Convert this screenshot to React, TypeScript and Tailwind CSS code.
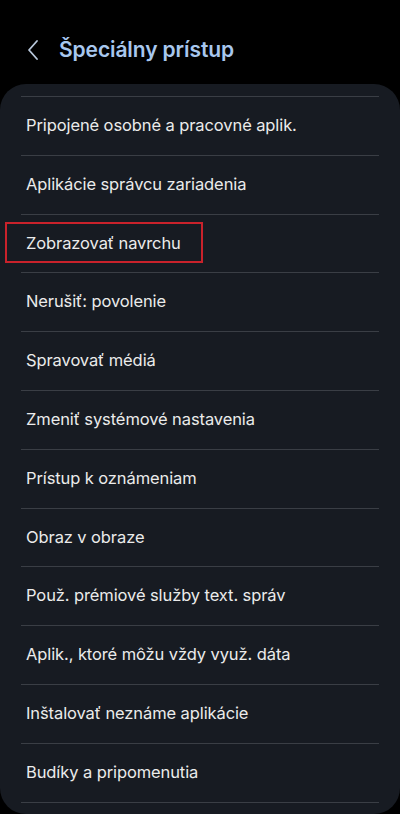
const items = [
  'Pripojené osobné a pracovné aplik.',
  'Aplikácie správcu zariadenia',
  'Zobrazovať navrchu',
  'Nerušiť: povolenie',
  'Spravovať médiá',
  'Zmeniť systémové nastavenia',
  'Prístup k oznámeniam',
  'Obraz v obraze',
  'Použ. prémiové služby text. správ',
  'Aplik., ktoré môžu vždy využ. dáta',
  'Inštalovať neznáme aplikácie',
  'Budíky a pripomenutia',
]

export default function App() {
  return (
    <div
      className="w-[400px] h-[814px] bg-black overflow-hidden flex flex-col"
      style={{ fontFamily: 'Inter, Roboto, "Noto Sans", sans-serif' }}
    >
      {/* Header */}
      <div className="h-[84px] flex items-center pl-[26px] pt-[16px]">
        <svg width="14" height="22" viewBox="0 0 14 22" fill="none">
          <path d="M11 2 L3 11 L11 20" stroke="#b9c8dc" strokeWidth="1.8" strokeLinecap="round" strokeLinejoin="round" />
        </svg>
        <h1 className="ml-[19px] text-[21px] font-semibold text-[#a8c7ee] tracking-[-0.1px]">
          Špeciálny prístup
        </h1>
      </div>

      {/* List card */}
      <div className="flex-1 bg-[#171b22] rounded-[26px] pt-[12px] px-[21px]">
        <div className="border-t border-[#3a3e45]" />
        {items.map((item) => (
          <div
            key={item}
            className="h-[58.8px] border-b border-[#3a3e45] flex items-center pb-[1px]"
          >
            {item === 'Zobrazovať navrchu' ? (
              <span className="-ml-[16px] h-[41px] w-[198px] border-2 border-[#c9222b] flex items-center pl-[19px] text-[16.5px] text-[#ebebeb] tracking-[-0.1px]">
                {item}
              </span>
            ) : (
              <span className="pl-[5px] text-[16.5px] text-[#ebebeb] tracking-[-0.1px]">{item}</span>
            )}
          </div>
        ))}
      </div>
    </div>
  )
}
